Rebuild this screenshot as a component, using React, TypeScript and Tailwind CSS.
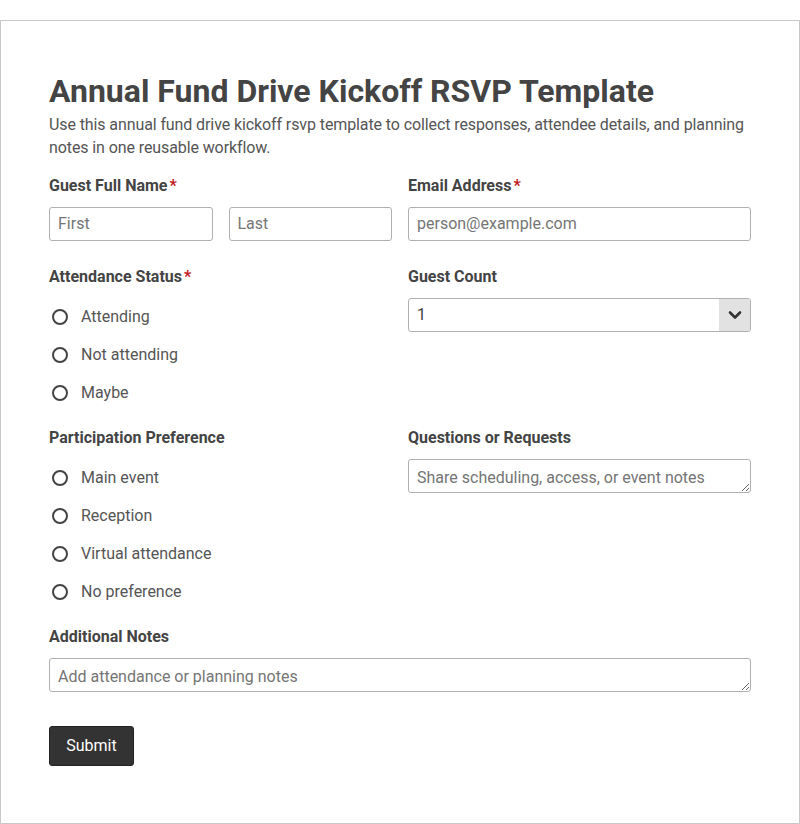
import React from "react";

const font = { fontFamily: "Roboto, 'Liberation Sans', Arial, sans-serif" };

function Label({ text, required }: { text: string; required?: boolean }) {
  return (
    <div className="text-[16px] leading-[19px] font-bold text-[#444444]">
      {text}
      {required && <span className="text-[#c0151b] ml-[2px]">*</span>}
    </div>
  );
}

function Radio({ text }: { text: string }) {
  return (
    <label className="flex items-center h-5">
      <span className="ml-[3px] w-4 h-4 rounded-full border-2 border-[#444444] bg-white box-border" />
      <span className="ml-[13px] text-[16px] leading-5 text-[#555555]">{text}</span>
    </label>
  );
}

const inputCls =
  "block w-full h-[34px] border border-[#b0b0b0] rounded-[3px] px-2 pb-[2px] text-[16px] text-[#444] placeholder:text-[#757575] bg-white outline-none";

const areaCls =
  "mt-3 block w-full h-[34px] border border-[#b0b0b0] rounded-[3px] px-2 pt-[7px] pb-[3px] text-[16px] leading-[22px] text-[#444] placeholder:text-[#757575] bg-white outline-none";

export default function App() {
  return (
    <div style={font} className="bg-white min-h-[824px] pt-5">
      <div className="border border-[#c8c8c8] h-[804px] px-12 pt-[51px] box-border">
        <h1 className="text-[32px] leading-[38px] font-bold text-[#444444] mb-[3px]">
          Annual Fund Drive Kickoff RSVP Template
        </h1>
        <p className="text-[16px] leading-[23px] text-[#555555] mb-[17px] tracking-[-0.1px]">
          Use this annual fund drive kickoff rsvp template to collect responses, attendee details, and planning notes in one reusable workflow.
        </p>

        <div className="grid grid-cols-2 gap-x-4 gap-y-[25px]">
          <div className="pb-[1px]">
            <Label text="Guest Full Name" required />
            <div className="mt-3 grid grid-cols-2 gap-4">
              <input className={inputCls} placeholder="First" />
              <input className={inputCls} placeholder="Last" />
            </div>
          </div>
          <div className="pb-[1px]">
            <Label text="Email Address" required />
            <input className={inputCls + " mt-3"} placeholder="person@example.com" />
          </div>

          <div>
            <Label text="Attendance Status" required />
            <div className="mt-[21px] flex flex-col gap-[18px]">
              <Radio text="Attending" />
              <Radio text="Not attending" />
              <Radio text="Maybe" />
            </div>
          </div>
          <div>
            <Label text="Guest Count" />
            <div className="mt-3 flex h-[34px] border border-[#b0b0b0] rounded-[3px] overflow-hidden">
              <div className="flex-1 px-2 flex items-center text-[16px] text-[#444]">1</div>
              <div className="w-[31px] bg-[#e2e2e2] flex items-center justify-center">
                <svg width="14" height="10" viewBox="0 0 14 10">
                  <path d="M2 2.5 L7 7.5 L12 2.5" fill="none" stroke="#333" strokeWidth="2.6" strokeLinecap="round" strokeLinejoin="round" />
                </svg>
              </div>
            </div>
          </div>

          <div>
            <Label text="Participation Preference" />
            <div className="mt-[21px] flex flex-col gap-[18px]">
              <Radio text="Main event" />
              <Radio text="Reception" />
              <Radio text="Virtual attendance" />
              <Radio text="No preference" />
            </div>
          </div>
          <div>
            <Label text="Questions or Requests" />
            <textarea rows={1} className={areaCls} placeholder="Share scheduling, access, or event notes" />
          </div>

          <div className="col-span-2">
            <Label text="Additional Notes" />
            <textarea rows={1} className={areaCls} placeholder="Add attendance or planning notes" />
          </div>
        </div>

        <button className="mt-[34px] h-10 w-[85px] bg-[#333333] border border-[#222] rounded-[3px] text-white text-[16px]">
          Submit
        </button>
      </div>
    </div>
  );
}
